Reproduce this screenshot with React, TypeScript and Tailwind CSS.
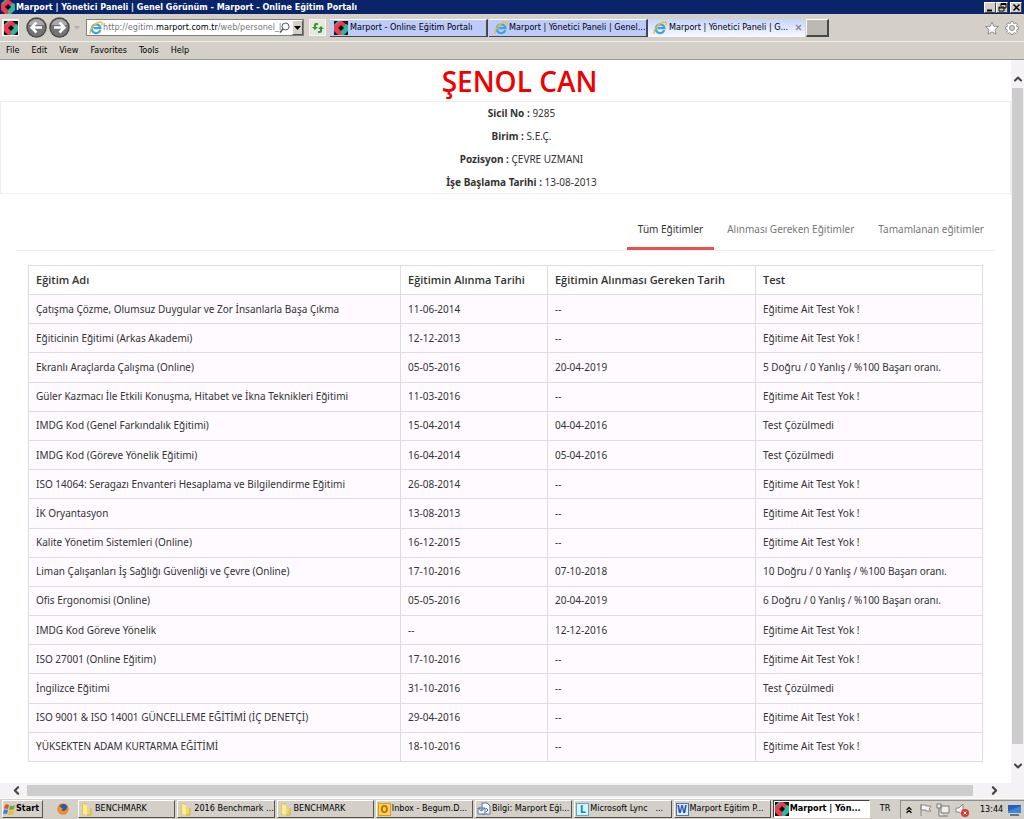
import { useState } from "react";
import { ChevronDown, ChevronLeft, ChevronRight, ChevronUp, ChevronsUp } from "lucide-react";

const trainings = [
  ["Çatışma Çözme, Olumsuz Duygular ve Zor İnsanlarla Başa Çıkma", "11-06-2014", "--", "Eğitime Ait Test Yok !"],
  ["Eğiticinin Eğitimi (Arkas Akademi)", "12-12-2013", "--", "Eğitime Ait Test Yok !"],
  ["Ekranlı Araçlarda Çalışma (Online)", "05-05-2016", "20-04-2019", "5 Doğru / 0 Yanlış / %100 Başarı oranı."],
  ["Güler Kazmacı İle Etkili Konuşma, Hitabet ve İkna Teknikleri Eğitimi", "11-03-2016", "--", "Eğitime Ait Test Yok !"],
  ["IMDG Kod (Genel Farkındalık Eğitimi)", "15-04-2014", "04-04-2016", "Test Çözülmedi"],
  ["IMDG Kod (Göreve Yönelik Eğitimi)", "16-04-2014", "05-04-2016", "Test Çözülmedi"],
  ["ISO 14064: Seragazı Envanteri Hesaplama ve Bilgilendirme Eğitimi", "26-08-2014", "--", "Eğitime Ait Test Yok !"],
  ["İK Oryantasyon", "13-08-2013", "--", "Eğitime Ait Test Yok !"],
  ["Kalite Yönetim Sistemleri (Online)", "16-12-2015", "--", "Eğitime Ait Test Yok !"],
  ["Liman Çalışanları İş Sağlığı Güvenliği ve Çevre (Online)", "17-10-2016", "07-10-2018", "10 Doğru / 0 Yanlış / %100 Başarı oranı."],
  ["Ofis Ergonomisi (Online)", "05-05-2016", "20-04-2019", "6 Doğru / 0 Yanlış / %100 Başarı oranı."],
  ["IMDG Kod Göreve Yönelik", "--", "12-12-2016", "Eğitime Ait Test Yok !"],
  ["ISO 27001 (Online Eğitim)", "17-10-2016", "--", "Eğitime Ait Test Yok !"],
  ["İngilizce Eğitimi", "31-10-2016", "--", "Test Çözülmedi"],
  ["ISO 9001 & ISO 14001 GÜNCELLEME EĞİTİMİ (İÇ DENETÇİ)", "29-04-2016", "--", "Eğitime Ait Test Yok !"],
  ["YÜKSEKTEN ADAM KURTARMA EĞİTİMİ", "18-10-2016", "--", "Eğitime Ait Test Yok !"],
];

const details = [
  ["Sicil No :", "9285"],
  ["Birim :", "S.E.Ç."],
  ["Pozisyon :", "ÇEVRE UZMANI"],
  ["İşe Başlama Tarihi :", "13-08-2013"],
];

const tabs = ["Tüm Eğitimler", "Alınması Gereken Eğitimler", "Tamamlanan eğitimler"];

// Marport logo, black square with a red and green ring
function MarportIcon({ round = false }: { round?: boolean }) {
  return (
    <svg viewBox="0 0 14 14" className="size-[14px] shrink-0">
      {!round && <rect width="14" height="14" fill="#151515" />}
      <path d="M4 0h4l5 4-2 3H2L0 9V4z" fill="#ee3a4c" />
      <path d="M0 6h6l2 4v4H4L0 10z" fill="#ee3a4c" />
      <path d="M14 4v6l-4 4H7V9l4-5 1-1z" fill="#2fb79d" />
      <path d="M4 0h2L2 4H0z" fill="#2fb79d" />
      <path d="M7 4l3 3-3 3-3-3z" fill="#0b0b0b" />
    </svg>
  );
}

function ExplorerIcon() {
  return (
    <svg viewBox="0 0 14 14" className="size-[14px] shrink-0">
      <path d="M11.300 9.200A4.400 4.400 0 1 1 11.500 7.200H4.500" fill="none" stroke="#3fa4df" strokeWidth="2.200" />
      <path d="M1.500 13C-.5 10.500 5 2 11 1c3-.4 2.500 2 1.500 3.500" fill="none" stroke="#e8bd35" strokeWidth="1.300" />
    </svg>
  );
}

function FolderIcon() {
  return (
    <svg viewBox="0 0 14 14" className="size-[14px] shrink-0">
      <path d="M2 1h5v12H2z" fill="#e8c64d" />
      <path d="M3 2l4 1v10l-4-1z" fill="#fbeb9b" />
      <path d="M7 6h4v7H7z" fill="#f2d566" />
      <path d="M11 6v7H7" fill="none" stroke="#d3a938" />
    </svg>
  );
}

// Square Office style icon with a letter in it
function LetterIcon({ kind }: { kind: string }) {
  const colors =
    kind === "O"
      ? "border-[#d99a16] bg-[#ffd557] text-[#b96b00]"
      : kind === "L"
        ? "border-[#5ba9c4] bg-[#d6f2fa] text-[#138cab]"
        : "border-[#4777b8] bg-[#e4edfa] text-[#1f58ab]";
  return <span className={`flex size-[13px] shrink-0 items-center justify-center border text-[10px] font-bold ${colors}`}>{kind}</span>;
}

function MailIcon() {
  return (
    <svg viewBox="0 0 14 14" className="size-[14px] shrink-0" fill="#f7faff" stroke="#54749f">
      <path d="M5 1h5l3 3v8H5z" />
      <path d="M1 6h7v6H1zM1 6l3.500 3L8 6" />
      <path d="M9 6l2 2-2 2" fill="none" stroke="#3563a8" />
    </svg>
  );
}

// Classic Windows bevel, sunken for the active window
const raised = "border-t-white border-l-white border-b-[#55534f] border-r-[#55534f] bg-[#d4d0c8]";
const sunken = "border-t-[#404040] border-l-[#404040] border-b-white border-r-white bg-white font-bold";

function NavButton({ label, flip }: { label: string; flip?: boolean }) {
  return (
    <button aria-label={label} className="size-[21px] shrink-0">
      <svg viewBox="0 0 21 21" className={flip ? "size-full -scale-x-100" : "size-full"}>
        <circle cx="10.500" cy="10.500" r="9.500" fill="#747474" stroke="#4b4b4b" strokeWidth="1.500" />
        <path d="M2.500 8a8.500 8.500 0 0 1 16 0z" fill="#a9a9a9" />
        <path d="M16 10.500H6M10.500 5.500l-5 5 5 5" fill="none" stroke="#fff" strokeWidth="2.500" />
      </svg>
    </button>
  );
}

function TitleBar() {
  const control = "flex h-[11px] w-[12px] items-center justify-center border border-t-white border-l-white border-b-[#404040] border-r-[#404040] bg-[#d4d0c8]";
  return (
    <header className="flex h-[14px] items-center bg-[#0a246a] pl-px pr-[2px] text-white">
      <MarportIcon round />
      <h1 className="ml-px flex-1 text-[9px] leading-[14px] font-bold">Marport | Yönetici Paneli | Genel Görünüm - Marport - Online Eğitim Portalı</h1>
      <button aria-label="Minimize" className={control}>
        <svg viewBox="0 0 9 9" className="size-[9px]"><path d="M1 7.500h5" stroke="#000" strokeWidth="2" /></svg>
      </button>
      <button aria-label="Restore" className={control}>
        <svg viewBox="0 0 9 9" className="size-[9px]" fill="none" stroke="#000"><path d="M3 3V.5h5V5H6M3 1.500h5M1 4h5v4H1zM1 5h5" /></svg>
      </button>
      <button aria-label="Close" className={`${control} ml-[2px]`}>
        <svg viewBox="0 0 9 9" className="size-[9px]"><path d="M1.500 1.500l6 6M7.500 1.500l-6 6" stroke="#000" strokeWidth="1.500" /></svg>
      </button>
    </header>
  );
}

function AddressBar() {
  const [url, setUrl] = useState("");
  return (
    <div className="flex h-[27px] items-center bg-[#d4d0c8] pr-[5px]">
      <span className="ml-[2px] flex size-[17px] items-center justify-center border border-white bg-[#e8e5df]"><MarportIcon /></span>
      <div className="ml-[7px] flex gap-[2px]">
        <NavButton label="Back" />
        <NavButton label="Forward" flip />
      </div>
      <svg viewBox="0 0 6 4" className="ml-[4px] h-[4px] w-[6px]"><path d="M0 0h6L3 4z" fill="#b5b1aa" /></svg>
      <div className="relative ml-[6px] flex h-[17px] w-[218px] items-center border border-[#808080] bg-white pl-[2px] text-[9px]">
        <ExplorerIcon />
        <input
          aria-label="Address"
          value={url}
          onChange={(e) => setUrl(e.target.value)}
          className="ml-[2px] w-[174px] bg-transparent outline-none"
        />
        {/* The domain is drawn darker until the user types */}
        {url === "" && (
          <span className="pointer-events-none absolute left-[16px] whitespace-nowrap text-[#777]">
            http://egitim.<span className="text-black">marport.com.tr</span>/web/personel_l
          </span>
        )}
        <button aria-label="Search" className="shrink-0">
          <svg viewBox="0 0 11 11" className="size-[11px]" fill="none" stroke="#555"><circle cx="6.500" cy="4.500" r="3.500" /><path d="M4 7L1 10.500" strokeWidth="1.500" /></svg>
        </button>
        <button aria-label="Show addresses" className="ml-auto flex h-[15px] w-[11px] shrink-0 items-center justify-center border border-t-white border-l-white border-r-[#555] border-b-[#555] bg-[#d4d0c8]">
          <svg viewBox="0 0 7 4" className="h-[4px] w-[7px]"><path d="M0 0h7L3.500 4z" /></svg>
        </button>
      </div>
      <button aria-label="Refresh" className="ml-[5px] flex size-[17px] items-center justify-center border border-[#f5f3ef] bg-[#e9e7e1]">
        <svg viewBox="0 0 12 12" className="size-[12px]" fill="#2f9a35"><path d="M6 1v2H4v2h2L3 8 0 5h2V3q0-2 2-2zM6 11V9h2V7H6l3-3 3 3h-2v2q0 2-2 2z" /></svg>
      </button>
      <nav className="ml-[4px] flex h-[18px] text-[9px] whitespace-nowrap">
        <button className="flex w-[158px] items-center gap-[2px] border-t border-r-2 border-b border-t-white border-r-[#45484f] border-b-[#45484f] bg-[#bccbfa] pl-[4px]">
          <MarportIcon />
          Marport - Online Eğitim Portalı
        </button>
        <button className="ml-px flex w-[159px] items-center gap-px border-t border-r-2 border-b border-t-white border-r-[#45484f] border-b-[#45484f] bg-[#bccbfa] pl-[5px]">
          <ExplorerIcon />
          Marport | Yönetici Paneli | Genel...
        </button>
        <button className="flex w-[143px] items-center gap-[2px] bg-linear-to-b from-[#c5d4ff] to-[#f7faff] pl-[5px]">
          <ExplorerIcon />
          Marport | Yönetici Paneli | G...
        </button>
        <button aria-label="Close tab" className="flex w-[14px] items-center justify-center bg-linear-to-b from-[#c5d4ff] to-[#f7faff]">
          <svg viewBox="0 0 7 7" className="size-[7px]"><path d="M1 1l5 5M6 1L1 6" stroke="#8c8c94" strokeWidth="1.500" /></svg>
        </button>
        <button aria-label="New tab" className="ml-px w-[23px] border border-r-2 border-b-2 border-white border-r-[#45484f] border-b-[#45484f] bg-[#bdb9b2]" />
      </nav>
      <div className="ml-auto flex gap-[6px]">
        <button aria-label="Favorites">
          <svg viewBox="0 0 14 14" className="size-[14px]"><path d="M7 1l1.800 4.200 4.700.4L10 8.700l1 4.500-4-2.400-4 2.400 1-4.500L.5 5.600l4.700-.4z" fill="#fff" stroke="#8e8e8e" /></svg>
        </button>
        <button aria-label="Tools">
          <svg viewBox="0 0 14 14" className="size-[14px]">
            <path d="M6 .5h2l.5 1.800 1 .4 1.600-.9 1.300 1.300-.9 1.600.4 1 1.600.5v2l-1.600.5-.4 1 .9 1.600-1.300 1.300-1.600-.9-1 .4L8 13.500H6l-.5-1.400-1-.4-1.600.9-1.300-1.300.9-1.600-.4-1L.5 8V6l1.600-.3.4-1-.9-1.600 1.300-1.300 1.600.9 1-.4z" fill="#fff" stroke="#8e8e8e" />
            <circle cx="7" cy="7" r="2.500" fill="#d4d0c8" stroke="#8e8e8e" />
          </svg>
        </button>
      </div>
    </div>
  );
}

function MenuBar() {
  return (
    <nav className="flex h-[19px] items-center gap-[12px] border-t border-b border-t-[#f3f1ec] border-b-[#999] bg-[#d4d0c8] pl-[6px] text-[9px]">
      {["File", "Edit", "View", "Favorites", "Tools", "Help"].map((item) => (
        <button key={item}>{item}</button>
      ))}
    </nav>
  );
}

function Page() {
  const [active, setActive] = useState(0);
  return (
    <main className="min-w-0 flex-1 bg-white pb-[21px] font-['Noto_Sans','Open_Sans',sans-serif] text-[10px] text-[#333]">
      <h2 className="pt-px pl-7 text-center font-['Open_Sans',sans-serif] text-[28px] leading-[40px] font-semibold text-[#f00000]">ŞENOL CAN</h2>
      <dl className="flex flex-col gap-[3px] border border-[#eee] py-px pl-8 text-center leading-5">
        {details.map(([label, value]) => (
          <div key={label}>
            <dt className="inline font-bold">{label}</dt> <dd className="inline">{value}</dd>
          </div>
        ))}
      </dl>
      <div role="tablist" className="mx-4 mt-[17px] flex h-[40px] justify-end gap-[2px] border-b border-[#eee]">
        {tabs.map((tab, i) => (
          <button
            key={tab}
            role="tab"
            aria-selected={active === i}
            onClick={() => setActive(i)}
            className={active === i ? "border-b-3 border-[#ea5050] px-[11px]" : "border-b-3 border-transparent px-[11px] text-[#777]"}
          >
            {tab}
          </button>
        ))}
      </div>
      <div className="mt-[14px] px-7">
        <table className="h-[497px] w-full table-fixed border-collapse text-left">
          <colgroup>
            <col className="w-[39%]" />
            <col className="w-[15.4%]" />
            <col className="w-[21.8%]" />
            <col />
          </colgroup>
          <thead>
            <tr className="font-['Open_Sans',sans-serif] text-[11px]">
              {["Eğitim Adı", "Eğitimin Alınma Tarihi", "Eğitimin Alınması Gereken Tarih", "Test"].map((head) => (
                <th key={head} className="h-[29px] border border-[#ddd] px-[7px] font-semibold">{head}</th>
              ))}
            </tr>
          </thead>
          <tbody>
            {trainings.map((row) => (
              <tr key={row[0]} className="bg-[#fefaff]">
                {row.map((cell, i) => (
                  <td key={i} className="border border-[#ddd] px-[7px]">{cell}</td>
                ))}
              </tr>
            ))}
          </tbody>
        </table>
      </div>
    </main>
  );
}

const tasks = [
  { icon: <FolderIcon />, text: "BENCHMARK" },
  { icon: <FolderIcon />, text: "2016 Benchmark ..." },
  { icon: <FolderIcon />, text: "BENCHMARK" },
  { icon: <LetterIcon kind="O" />, text: "Inbox - Begum.D..." },
  { icon: <MailIcon />, text: "Bilgi: Marport Eği..." },
  { icon: <LetterIcon kind="L" />, text: "Microsoft Lync   ..." },
  { icon: <LetterIcon kind="W" />, text: "Marport Eğitim P..." },
  { icon: <MarportIcon />, text: "Marport | Yön...", active: true },
];

function TaskBar() {
  return (
    <footer className="flex h-[21px] items-center border-t border-white bg-[#d4d0c8] pl-[2px] text-[9px]">
      <button className={`flex h-[18px] w-[41px] shrink-0 items-center border font-bold ${raised}`}>
        <svg viewBox="0 0 13 13" className="size-[13px] shrink-0">
          <path d="M2 2q2-1.500 4 0L5 6Q3 5 1 6z" fill="#e8502d" />
          <path d="M7 2.500q2 1 5-.5l-1 4q-3 1.500-5 .5z" fill="#6dae32" />
          <path d="M1 7q2-1 4 0l-1 4q-2-1-4 0z" fill="#2f83d0" />
          <path d="M6 7.500q2 1 5 0l-1 4q-3 1-5 0z" fill="#f2bc2c" />
        </svg>
        Start
      </button>
      <button aria-label="Firefox" className="mr-[9px] ml-[14px] shrink-0">
        <svg viewBox="0 0 12 12" className="size-[12px]">
          <circle cx="6" cy="6" r="5.500" fill="#df5a18" />
          <circle cx="6.500" cy="4.500" r="3.500" fill="#2b5aa3" />
          <path d="M1 3q1.500 0 3 1.500L6 6 4 7q2 2 5 0l2-4q1 8-5 8Q0 11 1 3z" fill="#f39324" />
        </svg>
      </button>
      <div className="flex min-w-0 flex-1 gap-[2px]">
        {tasks.map((task, i) => (
          <button key={i} className={`flex h-[18px] min-w-0 flex-1 items-center gap-px border pl-px whitespace-pre ${task.active ? sunken : raised}`}>
            {task.icon}
            {task.text}
          </button>
        ))}
      </div>
      <button className="w-[30px] shrink-0">TR</button>
      <div className="flex h-[18px] w-[124px] shrink-0 items-center justify-between border-t border-l border-[#909090] px-[3px]">
        <button aria-label="Show hidden icons"><ChevronsUp size={10} strokeWidth={3} color="#000" /></button>
        <svg viewBox="0 0 13 13" className="size-[13px]" fill="#f4f4f4" stroke="#888"><path d="M2 1v12M2 2h5v1h5l-2 3 2 2H7V7H2z" /></svg>
        <svg viewBox="0 0 14 14" className="size-[14px]" fill="#eee" stroke="#777"><path d="M5 3h8v7H5zM7 13h5M1 1h4v4H1zM3 5v8h4" /></svg>
        <svg viewBox="0 0 14 14" className="size-[14px]">
          <path d="M1 5h3l4-4v11L4 9H1z" fill="#f5f5f5" stroke="#888" />
          <circle cx="10" cy="10" r="4" fill="#d9372d" />
          <path d="M8.500 8.500l3 3M11.500 8.500l-3 3" stroke="#fff" />
        </svg>
        <time className="ml-[6px]">13:44</time>
        <svg viewBox="0 0 13 12" className="h-[12px] w-[13px]"><path d="M0 1h13v8H0z" fill="#2360bd" /><path d="M0 7l13-5v7H0z" fill="#3d86dc" /><path d="M2 10h9v2H2z" fill="#65758d" /></svg>
      </div>
    </footer>
  );
}

export default function App() {
  return (
    <div className="flex min-h-screen flex-col bg-white font-['DejaVu_Sans_Condensed','DejaVu_Sans',sans-serif] text-black">
      <TitleBar />
      <AddressBar />
      <MenuBar />
      <div className="flex flex-1">
        <Page />
        <div className="flex w-[13px] flex-col items-center bg-[#f4f2f4] py-[9px] text-[#444]">
          <button aria-label="Scroll up" className="flex h-[19px] items-center"><ChevronUp size={12} strokeWidth={4} /></button>
          <div className="w-[11px] flex-1 bg-[#cdcdcd]" />
          <button aria-label="Scroll down" className="mt-[14px] flex h-[16px] items-center"><ChevronDown size={12} strokeWidth={4} /></button>
        </div>
      </div>
      <div className="flex h-[15px] items-center bg-[#f4f2f4] text-[#444]">
        <button aria-label="Scroll left" className="flex w-[27px] justify-end pr-[4px]"><ChevronLeft size={13} strokeWidth={4} /></button>
        <div className="h-[11px] flex-1 bg-[#cdcdcd]" />
        <button aria-label="Scroll right" className="flex w-[51px] pl-[15px]"><ChevronRight size={13} strokeWidth={4} /></button>
      </div>
      <TaskBar />
    </div>
  );
}
